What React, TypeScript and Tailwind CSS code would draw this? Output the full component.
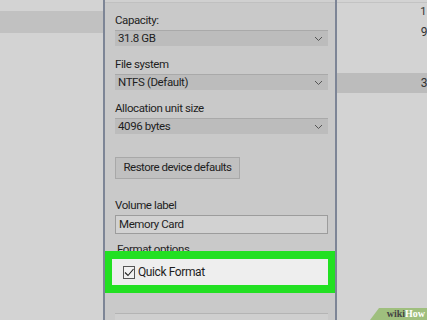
import React from 'react';

const Chevron: React.FC = () => (
  <svg width="9" height="6" viewBox="0 0 9 6" className="shrink-0">
    <path d="M1 1 L4.5 4.5 L8 1" fill="none" stroke="#555" strokeWidth="1" />
  </svg>
);

const Select: React.FC<{ value: string }> = ({ value }) => (
  <div className="mt-[3px] h-[16px] w-[213px] flex items-center justify-between pl-[3px] pr-[5px] bg-[#bcbcbc] border-t border-[#a9a9a9] leading-none">
    <span>{value}</span>
    <Chevron />
  </div>
);

const Label: React.FC<{ children: React.ReactNode; className?: string }> = ({ children, className }) => (
  <div className={`leading-[14px] whitespace-nowrap ${className ?? ''}`}>{children}</div>
);

export default function App() {
  return (
    <div
      className="w-[427px] h-[320px] overflow-hidden flex bg-[#d3d3d3] text-[11.5px] tracking-[-0.4px] text-[#1e1e1e]"
      style={{ fontFamily: 'Roboto, "Noto Sans", sans-serif' }}
    >
      {/* left window */}
      <div className="w-[103px] shrink-0 flex flex-col">
        <div className="h-[11px]" />
        <div className="h-[22px] bg-[#c1c1c1]" />
      </div>

      {/* dialog */}
      <div className="w-[234px] shrink-0 h-full overflow-hidden bg-[#c9c9c9] border-l-2 border-r-2 border-[#7d8596] flex flex-col">
        <div className="shrink-0 h-[3px] bg-[#d0d0d0] border-b border-[#c0c0c0]" />
        <div className="shrink-0 pl-[10px] flex flex-col">
          <Label className="mt-[10px]">Capacity:</Label>
          <Select value="31.8 GB" />
          <Label className="mt-[11px]">File system</Label>
          <Select value="NTFS (Default)" />
          <Label className="mt-[11px]">Allocation unit size</Label>
          <Select value="4096 bytes" />
          <div className="mt-[23px] w-[125px] h-[22px] bg-[#c0c0c0] border border-[#a8a8a8] flex items-center justify-center whitespace-nowrap tracking-[-0.5px]">
            Restore device defaults
          </div>
          <Label className="mt-[19px]">Volume label</Label>
          <div className="mt-[3px] w-[213px] h-[19px] bg-[#d2d2d2] border border-[#9c9c9c] flex items-center pl-[3px]">
            Memory Card
          </div>
          <Label className="mt-[8px] pl-[2px]">Format options</Label>
        </div>
        <div className="shrink-0 -mt-[5px] -ml-[1px] w-[232px] h-[42px] border-[8px] border-[#22e022] bg-[#eeeeee] flex items-center pl-[11px]">
          <div className="w-[12px] h-[13px] border border-[#555] bg-[#f2f2f2] flex items-center justify-center">
            <svg width="10" height="9" viewBox="0 0 10 9">
              <path d="M1 4.5 L4 7.5 L9.5 1" fill="none" stroke="#222" strokeWidth="1.1" />
            </svg>
          </div>
          <span className="ml-[3px] text-[12px]">Quick Format</span>
        </div>
        <div className="shrink-0 pl-[10px] mt-[20px]">
          <div className="w-[213px] h-[10px] bg-[#cfcfcf] border-t border-[#b4b4b4]" />
        </div>
      </div>

      {/* right window */}
      <div className="flex-1 flex flex-col relative text-[#333]">
        <div className="h-[3px] border-b border-[#c3c3c3]" />
        <div className="h-[14px] flex justify-end items-end pr-[1px] text-[11px] leading-none">1</div>
        <div className="h-[21px] flex justify-end items-end text-[12px] leading-none">9</div>
        <div className="h-[35px]" />
        <div className="h-[20px] bg-[#bcbcbc] flex justify-end items-center text-[12px] leading-none">3</div>
        <div
          className="absolute right-0 bottom-0 w-[57px] h-[12px] bg-[#9fbf7e] flex items-center justify-end pr-[2px] text-[10px] leading-none font-bold tracking-normal"
          style={{ clipPath: 'polygon(9px 0, 100% 0, 100% 100%, 0 100%)', fontFamily: '"Liberation Serif", serif' }}
        >
          <span className="text-[#444]">wiki</span>
          <span className="text-white">How</span>
        </div>
      </div>
    </div>
  );
}
